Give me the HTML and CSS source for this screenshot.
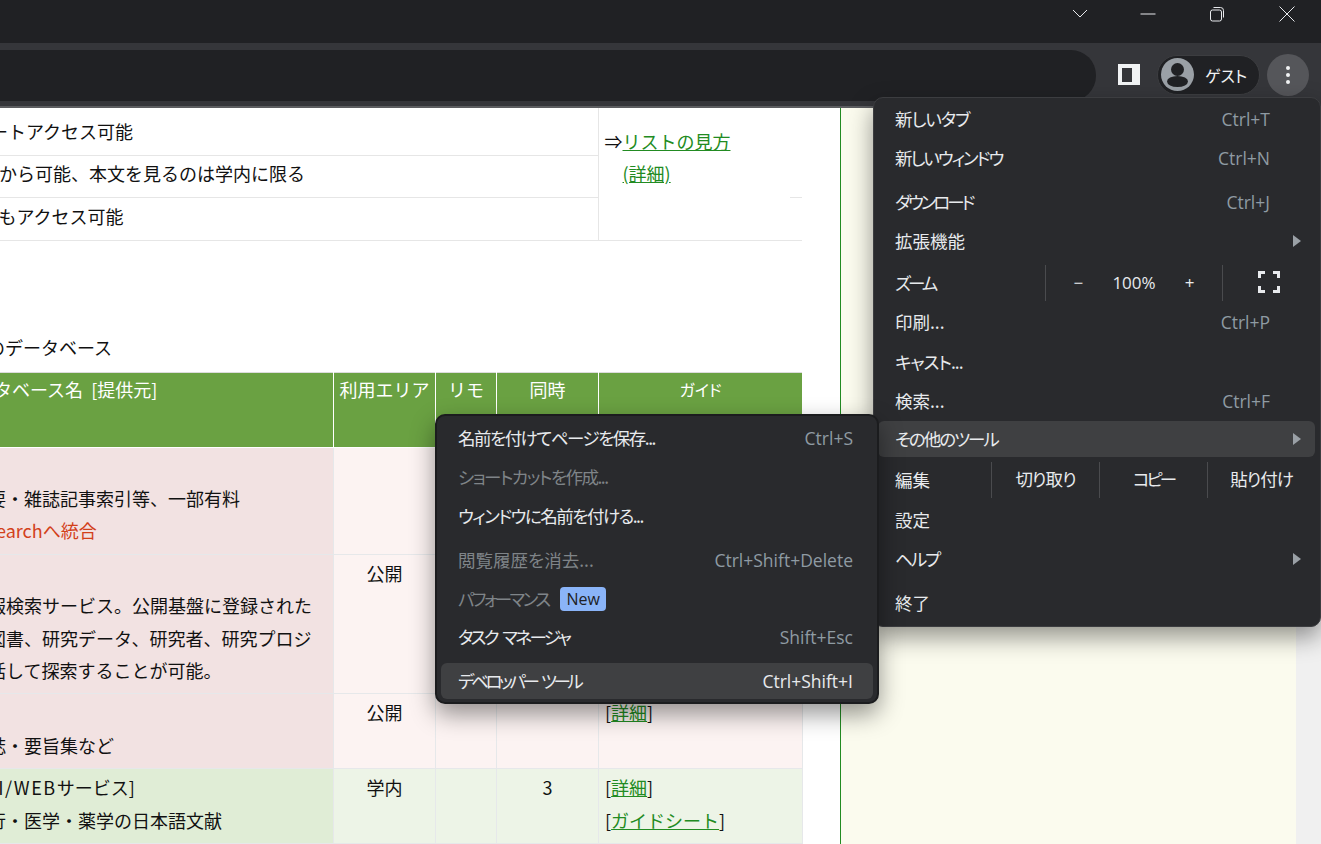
FILE: index.html
```html
<!DOCTYPE html>
<html lang="ja">
  <head>
    <meta charset="UTF-8" />
    <meta name="viewport" content="width=device-width, initial-scale=1.0" />
    <title>データベース</title>
    <link rel="stylesheet" href="styles.css">
  </head>
  <body>
    <div class="titlebar">
      <svg class="win-icon" width="18" height="18" viewBox="0 0 18 18"><path d="M2 5l7 7 7-7" /></svg>
      <svg class="win-icon win-min" width="18" height="18" viewBox="0 0 18 18"><path d="M1.500 9h15" /></svg>
      <svg class="win-icon win-max" width="18" height="18" viewBox="0 0 18 18"><rect x="2.500" y="5" width="11" height="11" rx="2" /><path d="M5.500 2.500h7a3 3 0 0 1 3 3v7" /></svg>
      <svg class="win-icon win-close" width="18" height="18" viewBox="0 0 18 18"><path d="M1.500 1.500l15 15M16.500 1.500l-15 15" /></svg>
    </div>

    <div class="toolbar">
      <div class="omnibox"></div>
      <div class="side-panel"><span></span></div>
      <div class="profile">
        <svg class="avatar" width="33" height="33" viewBox="0 0 33 33">
          <circle cx="16.500" cy="16.500" r="16.500" fill="#9aa0a6" />
          <circle cx="16.500" cy="11.500" r="6.500" fill="#202124" />
          <ellipse cx="16.500" cy="23.500" rx="10.500" ry="5.500" fill="#202124" />
        </svg>
        <span>ゲスト</span>
      </div>
      <div class="more"><i></i><i></i><i></i></div>
    </div>

    <div class="page">
      <main class="content">
        <table class="legend">
          <tr>
            <td class="shift">学外リモートアクセス可能</td>
            <td class="legend-guide" rowspan="3">
              <div>⇒<a href="#">リストの見方</a></div>
              <div class="legend-sub"><a href="#">(詳細)</a></div>
              <i class="legend-tick"></i>
            </td>
          </tr>
          <tr><td class="row-mid">検索は学外から可能、本文を見るのは学内に限る</td></tr>
          <tr><td class="row-last">学外からでもアクセス可能</td></tr>
        </table>

        <h2 class="caption">学内外のデータベース</h2>

        <table class="dblist">
          <thead>
            <tr>
              <th class="name">データベース名 [提供元]</th>
              <th>利用エリア</th>
              <th>リモ</th>
              <th>同時</th>
              <th class="guide-head">ガイド</th>
            </tr>
          </thead>
          <tbody>
            <tr class="open">
              <td class="name">
                <div>&nbsp;</div>
                <div>論文概要・雑誌記事索引等、一部有料</div>
                <div class="notice">CiNii Researchへ統合</div>
              </td>
              <td></td>
              <td></td>
              <td></td>
              <td></td>
            </tr>
            <tr class="open">
              <td class="name">
                <div>&nbsp;</div>
                <div>学術情報検索サービス。公開基盤に登録された</div>
                <div>論文、図書、研究データ、研究者、研究プロジ</div>
                <div>等を一括して探索することが可能。</div>
              </td>
              <td>公開</td>
              <td></td>
              <td></td>
              <td></td>
            </tr>
            <tr class="open">
              <td class="name">
                <div>&nbsp;</div>
                <div>学術雑誌・要旨集など</div>
              </td>
              <td>公開</td>
              <td></td>
              <td></td>
              <td class="guide">[<a href="#">詳細</a>]</td>
            </tr>
            <tr class="campus">
              <td class="name">
                <div class="api"><span class="latin">[API/WEB</span>サービス]</div>
                <div>国内刊行・医学・薬学の日本語文献</div>
              </td>
              <td>学内</td>
              <td></td>
              <td>3</td>
              <td class="guide">
                <div>[<a href="#">詳細</a>]</div>
                <div>[<a href="#">ガイドシート</a>]</div>
              </td>
            </tr>
            <tr class="campus">
              <td class="name">&nbsp;</td>
              <td></td>
              <td></td>
              <td></td>
              <td></td>
            </tr>
          </tbody>
        </table>
      </main>
      <aside class="sidebar"></aside>
    </div>

    <div class="menu mainmenu">
      <div class="item"><span class="t1">新しいタブ</span><span class="keys">Ctrl+T</span></div>
      <div class="item"><span class="t2">新しいウィンドウ</span><span class="keys">Ctrl+N</span></div>
      <div class="item sep"><span class="t3">ダウンロード</span><span class="keys">Ctrl+J</span></div>
      <div class="item arrow"><span>拡張機能</span></div>
      <div class="item split sep-s">
        <span class="split-label zoom-label t3">ズーム</span>
        <div class="zoom">
          <span>−</span>
          <span>100%</span>
          <span>+</span>
        </div>
        <div class="fullscreen">
          <svg width="22" height="22" viewBox="0 0 22 22"><path d="M1.500 7V1.500H7M15 1.500h5.500V7M20.500 15v5.500H15M7 20.500H1.500V15" /></svg>
        </div>
      </div>
      <div class="item"><span>印刷...</span><span class="keys">Ctrl+P</span></div>
      <div class="item wide"><span class="t1">キャスト...</span></div>
      <div class="item"><span>検索...</span><span class="keys">Ctrl+F</span></div>
      <div class="item hover arrow tight"><span class="t2">その他のツール</span></div>
      <div class="item split wide2">
        <span class="split-label edit-label">編集</span>
        <span class="edit-btn t1">切り取り</span>
        <span class="edit-btn t3">コピー</span>
        <span class="edit-btn t1">貼り付け</span>
      </div>
      <div class="item wide"><span>設定</span></div>
      <div class="item arrow"><span class="t2">ヘルプ</span></div>
      <div class="item sep-l"><span>終了</span></div>
    </div>

    <div class="menu submenu">
      <div class="item"><span class="t1s">名前を付けてページを保存...</span><span class="keys">Ctrl+S</span></div>
      <div class="item off"><span class="t1s">ショートカットを作成...</span></div>
      <div class="item"><span class="t1s">ウィンドウに名前を付ける...</span></div>
      <div class="item off sep"><span>閲覧履歴を消去...</span><span class="keys">Ctrl+Shift+Delete</span></div>
      <div class="item off"><span class="t2s">パフォーマンス</span><b class="badge">New</b></div>
      <div class="item tight"><span class="t2s">タスク マネージャ</span><span class="keys">Shift+Esc</span></div>
      <div class="item hover sep"><span class="t3s">デベロッパー ツール</span><span class="keys">Ctrl+Shift+I</span></div>
    </div>
  </body>
</html>
```

FILE: styles.css
```css
html,
body {
  height: 100%;
}
body {
  margin: 0;
  height: 844px;
  overflow: hidden;
  position: relative;
  background-color: #fff;
  font-family: "Noto Sans CJK JP", "Noto Sans", sans-serif;
  font-size: 18px;
  color: #111;
}
a {
  color: #228b22;
}

/* window chrome */
.titlebar {
  height: 43px;
  background-color: #202124;
  display: flex;
  justify-content: flex-end;
  align-items: center;
  padding: 0 25px 0 0;
  box-sizing: border-box;
}
.win-icon {
  fill: none;
  stroke: #e8eaed;
  stroke-width: 1;
  margin-bottom: 16px;
}
.win-min {
  margin-left: 50px;
}
.win-max {
  margin-left: 51px;
}
.win-close {
  margin-left: 52px;
}
.toolbar {
  height: 65px;
  box-sizing: border-box;
  background-color: #35363a;
  border-bottom: 2px solid #5c5d60;
  display: flex;
  align-items: center;
  position: relative;
}
.omnibox {
  width: 1126px;
  height: 51px;
  margin-top: 1px;
  margin-left: -30px;
  margin-right: 22px;
  background-color: #202124;
  border-radius: 25px;
  flex-shrink: 0;
}
.side-panel {
  width: 22px;
  height: 21px;
  background-color: #f1f3f4;
  box-sizing: border-box;
  padding: 4px 8px 3px 4px;
}
.side-panel span {
  display: block;
  height: 100%;
  background-color: #35363a;
}
.profile {
  margin-left: 17px;
  width: 103px;
  height: 40px;
  box-sizing: border-box;
  border: 1px solid #3c3d40;
  border-radius: 20px;
  background-color: #202124;
  display: flex;
  align-items: center;
  padding-left: 3px;
  gap: 11px;
  color: #f1f3f4;
  font-size: 16px;
  font-feature-settings: "palt";
}
.avatar {
  flex-shrink: 0;
}
.more {
  margin-left: 7px;
  width: 42px;
  height: 42px;
  border-radius: 50%;
  background-color: #55565a;
  display: flex;
  flex-direction: column;
  align-items: center;
  justify-content: center;
  gap: 3px;
}
.more i {
  display: block;
  width: 4px;
  height: 4px;
  border-radius: 50%;
  background-color: #f1f3f4;
}

/* page behind the menus */
.page {
  display: flex;
  height: 736px;
  overflow: hidden;
  background-color: #f0f0f0;
}
.content {
  width: 840px;
  flex-shrink: 0;
  background-color: #fff;
  overflow: hidden;
}
.sidebar {
  width: 455px;
  background-color: #fbfbee;
  border-left: 1px solid #228b22;
}
.legend {
  margin-left: -97px;
  width: 899px;
  border-collapse: collapse;
  table-layout: fixed;
}
.legend td {
  padding: 0 0 0 6px;
  height: 42px;
  border-bottom: 1px solid #e6e6e6;
  white-space: nowrap;
  box-sizing: border-box;
}
.legend td.shift {
  padding-left: 15px;
  height: 47px;
}
.legend td.row-mid {
  padding-bottom: 6px;
}
.legend td.row-last {
  height: 43px;
  padding-bottom: 6px;
}
.legend td.legend-guide {
  width: 204px;
  border-left: 1px solid #e6e6e6;
  vertical-align: top;
  padding-top: 17px;
  line-height: 32px;
  position: relative;
}
.legend-sub {
  padding-left: 18px;
}
.legend-tick {
  position: absolute;
  right: 0;
  bottom: 42px;
  width: 12px;
  height: 1px;
  background-color: #e6e6e6;
}
.caption {
  margin: 89px 0 0 -67px;
  height: 34px;
  padding-bottom: 8px;
  font-size: 18px;
  font-weight: 400;
  line-height: 34px;
  white-space: nowrap;
}
.dblist {
  margin-left: -97px;
  width: 900px;
  border-collapse: collapse;
  table-layout: fixed;
  line-height: 32.4px;
}
.dblist th {
  background-color: #6aa142;
  color: #fff;
  font-weight: 400;
  height: 75px;
  border: 1px solid #fff;
  border-top-color: #dcdcdc;
  vertical-align: top;
  padding: 0;
  box-sizing: border-box;
  width: 102px;
}
.dblist th:nth-child(3) {
  width: 61px;
}
.dblist th.guide-head {
  width: 204px;
  font-size: 16px;
  font-feature-settings: "palt";
}
.dblist th.name {
  width: auto;
  text-align: left;
  padding-left: 54px;
  white-space: nowrap;
  word-spacing: 4px;
}
.dblist td {
  border: 1px solid #e6e8ea;
  vertical-align: top;
  text-align: center;
  padding: 2px 0 7px;
}
.dblist td.name {
  text-align: left;
  padding-left: 30px;
  white-space: nowrap;
}
.dblist td.guide {
  text-align: left;
  padding-left: 6px;
}
.open td {
  background-color: #fcf3f2;
}
.open td.name {
  background-color: #f2e2e2;
}
.campus td {
  background-color: #edf4e7;
}
.campus td.name {
  background-color: #e0edd6;
}
.notice {
  color: #d2401a;
  margin-left: -11px;
}
.api {
  padding-left: 31px;
}
.latin {
  letter-spacing: 1.6px;
}

/* chrome menus */
.menu {
  position: absolute;
  box-sizing: border-box;
  background-color: #292a2d;
  border: 1px solid #3c3d40;
  border-radius: 10px;
  box-shadow: 0 10px 24px rgba(0, 0, 0, 0.42);
  display: flex;
  flex-direction: column;
  gap: 3px;
  color: #e8eaed;
  font-feature-settings: "palt";
  font-size: 17.5px;
}
.mainmenu {
  left: 873px;
  top: 97px;
  width: 448px;
  height: 530px;
  padding: 3px 5px 0 4px;
}
.submenu {
  left: 435px;
  top: 414px;
  width: 444px;
  height: 290px;
  padding: 4px 4px 0 4px;
  border: 2px solid #1b1c1e;
}
.item {
  height: 36px;
  flex-shrink: 0;
  display: flex;
  justify-content: space-between;
  align-items: center;
  padding: 0 45px 0 17px;
  border-radius: 6px;
  position: relative;
}
.item > span {
  padding-bottom: 2px;
}
.submenu .item {
  padding: 0 20px 0 17px;
}
.t1 {
  letter-spacing: -1px;
}
.t1s {
  letter-spacing: -1.5px;
}
.t2 {
  letter-spacing: -2px;
}
.t2s {
  letter-spacing: -2.6px;
  word-spacing: 4px;
}
.t3 {
  letter-spacing: -3px;
}
.t3s {
  letter-spacing: -3.4px;
  word-spacing: 4px;
}
.item > .keys {
  color: #8f9ba3;
  font-family: "Open Sans", "Noto Sans", sans-serif;
  font-size: 17.5px;
  padding-bottom: 0;
}
.off {
  color: #7f8488;
}
.hover {
  background-color: #3f4042;
}
.hover > .keys {
  color: #e8eaed;
}
.sep {
  margin-top: 5px;
}
.sep-s {
  margin-top: 3px;
}
.sep-l {
  margin-top: 5px;
}
.wide {
  margin-top: 1px;
}
.wide2 {
  margin-top: 2px;
}
.tight {
  margin-top: -1px;
}
.submenu .off:nth-child(5) {
  justify-content: flex-start;
}
.badge {
  margin-left: 12px;
  padding: 0 6px;
  height: 24px;
  line-height: 24px;
  border-radius: 4px;
  background-color: #8ab4f8;
  color: #202124;
  font-weight: 400;
  font-size: 16px;
  font-family: "Open Sans", "Noto Sans", sans-serif;
}
.arrow::after {
  content: "";
  position: absolute;
  right: 14px;
  top: 12px;
  border-left: 8px solid #9aa0a6;
  border-top: 6px solid transparent;
  border-bottom: 6px solid transparent;
}
.split {
  justify-content: flex-start;
  padding: 0 0 0 17px;
}
.item > .split-label {
  flex-shrink: 0;
}
.zoom-label {
  width: 150px;
}
.zoom {
  width: 178px;
  height: 36px;
  border-left: 1px solid #4a4b4e;
  border-right: 1px solid #4a4b4e;
  display: flex;
  align-items: center;
  justify-content: space-around;
  padding: 0 13px 2px;
  box-sizing: border-box;
  font-size: 17px;
  font-family: "Open Sans", "Noto Sans", sans-serif;
}
.fullscreen {
  margin-left: 35px;
  margin-bottom: 2px;
  height: 22px;
}
.fullscreen svg {
  fill: none;
  stroke: #e8eaed;
  stroke-width: 3;
}
.edit-label {
  width: 96px;
}
.item > .edit-btn {
  width: 108px;
  flex-shrink: 0;
  height: 36px;
  line-height: 34px;
  padding-bottom: 0;
  box-sizing: border-box;
  text-align: center;
  border-left: 1px solid #4a4b4e;
}
```
